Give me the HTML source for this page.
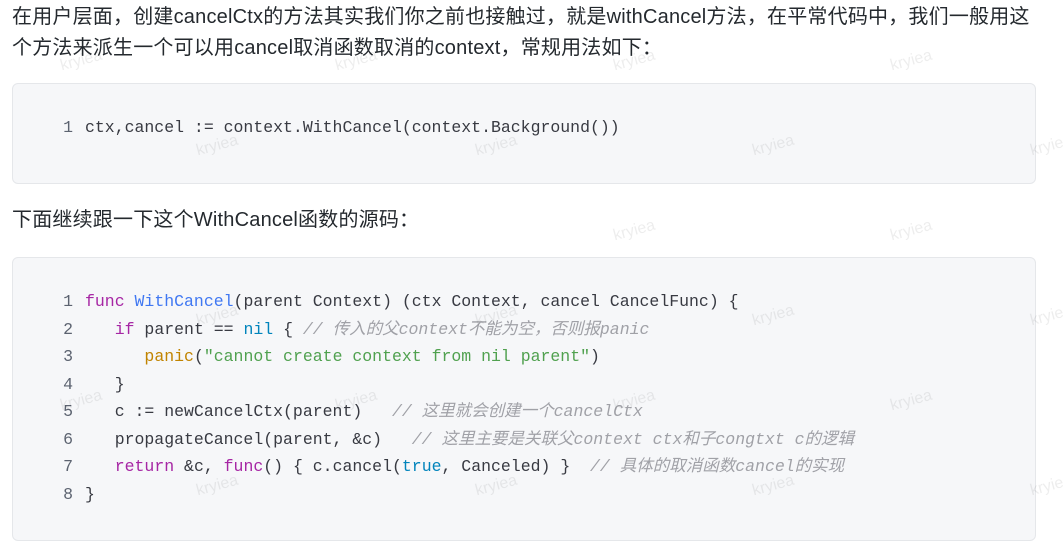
<!DOCTYPE html>
<html><head><meta charset="utf-8"><style>
body{margin:0;width:1063px;height:554px;background:#fff;overflow:hidden;position:relative;font-family:"Liberation Sans","Noto Sans CJK SC",sans-serif;color:#24292e}
p{position:absolute;left:12px;margin:0;font-size:20px;letter-spacing:0.2px;line-height:31px;white-space:nowrap}
.blk{position:absolute;left:12px;width:1022px;background:#f6f7f9;border:1px solid #e5e7ea;border-radius:6px}
.code{position:absolute;left:0;font-family:"Liberation Mono","Noto Sans CJK SC",monospace;font-size:16.5px;line-height:27.5px;white-space:pre;color:#383a42}
.n{display:inline-block;width:72px;text-align:right;padding-right:12px;box-sizing:border-box;color:#5c6370}
.k{color:#a626a4}.f{color:#4078f2}.b{color:#0184bc}.s{color:#50a14f}.p{color:#c18401}.c{color:#a0a1a7;font-style:italic}
.w{position:absolute;font-size:16px;color:rgba(0,0,0,0.07);transform:rotate(-15deg);font-family:"Liberation Sans",sans-serif}
</style></head><body>
<p style="top:2px">在用户层面，创建cancelCtx的方法其实我们你之前也接触过，就是withCancel方法，在平常代码中，我们一般用这</p>
<p style="top:33px">个方法来派生一个可以用cancel取消函数取消的context，常规用法如下：</p>
<div class="blk" style="top:83px;height:99px"><div class="code" style="top:30px"><span class="n">1</span>ctx,cancel := context.WithCancel(context.Background())</div></div>
<p style="top:205px">下面继续跟一下这个WithCancel函数的源码：</p>
<div class="blk" style="top:257px;height:282px"><div class="code" style="top:30px"><span class="n">1</span><span class="k">func</span> <span class="f">WithCancel</span>(parent Context) (ctx Context, cancel CancelFunc) {
<span class="n">2</span>   <span class="k">if</span> parent == <span class="b">nil</span> { <span class="c">// 传入的父context不能为空，否则报panic</span>
<span class="n">3</span>      <span class="p">panic</span>(<span class="s">"cannot create context from nil parent"</span>)
<span class="n">4</span>   }
<span class="n">5</span>   c := newCancelCtx(parent)   <span class="c">// 这里就会创建一个cancelCtx</span>
<span class="n">6</span>   propagateCancel(parent, &amp;c)   <span class="c">// 这里主要是关联父context ctx和子congtxt c的逻辑</span>
<span class="n">7</span>   <span class="k">return</span> &amp;c, <span class="k">func</span>() { c.cancel(<span class="b">true</span>, Canceled) }  <span class="c">// 具体的取消函数cancel的实现</span>
<span class="n">8</span>}</div></div>
<div class="w" style="left:60px;top:52px">kryiea</div><div class="w" style="left:335px;top:52px">kryiea</div><div class="w" style="left:613px;top:52px">kryiea</div><div class="w" style="left:890px;top:52px">kryiea</div>
<div class="w" style="left:196px;top:137px">kryiea</div><div class="w" style="left:475px;top:137px">kryiea</div><div class="w" style="left:752px;top:137px">kryiea</div><div class="w" style="left:1030px;top:137px">kryiea</div>
<div class="w" style="left:613px;top:222px">kryiea</div><div class="w" style="left:890px;top:222px">kryiea</div>
<div class="w" style="left:196px;top:307px">kryiea</div><div class="w" style="left:475px;top:307px">kryiea</div><div class="w" style="left:752px;top:307px">kryiea</div><div class="w" style="left:1030px;top:307px">kryiea</div>
<div class="w" style="left:60px;top:392px">kryiea</div><div class="w" style="left:335px;top:392px">kryiea</div><div class="w" style="left:613px;top:392px">kryiea</div><div class="w" style="left:890px;top:392px">kryiea</div>
<div class="w" style="left:196px;top:477px">kryiea</div><div class="w" style="left:475px;top:477px">kryiea</div><div class="w" style="left:752px;top:477px">kryiea</div><div class="w" style="left:1030px;top:477px">kryiea</div>
</body></html>
